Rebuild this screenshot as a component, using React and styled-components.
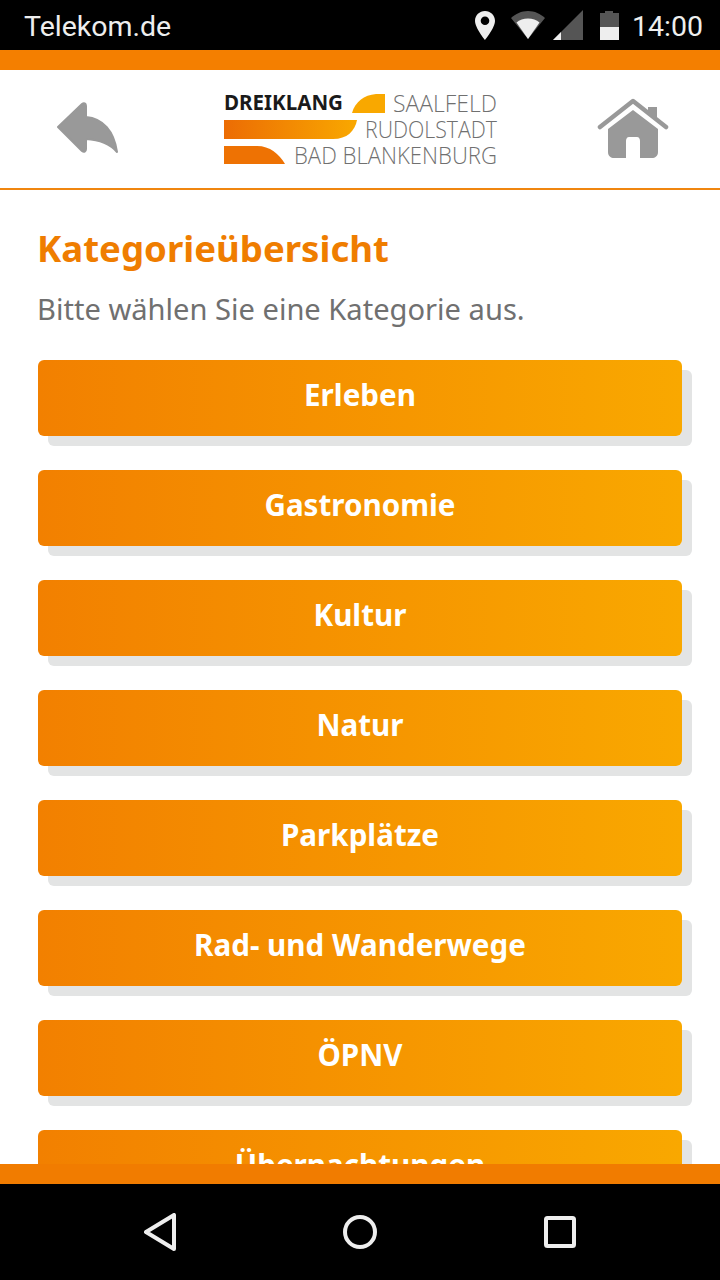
import React from 'react'
import styled, { createGlobalStyle } from 'styled-components'

const categories = [
    'Erleben',
    'Gastronomie',
    'Kultur',
    'Natur',
    'Parkplätze',
    'Rad- und Wanderwege',
    'ÖPNV',
    'Übernachtungen',
]

function App() {
    return (
        <Screen>
            <GlobalStyle />
            <StatusBar>
                <Carrier>Telekom.de</Carrier>
                <StatusIcons>
                    <svg width="20" height="29" viewBox="0 0 20 29">
                        <path fillRule="evenodd" fill="#eee" d="M10 0C4.5 0 0 4.3 0 9.8 0 17 10 29 10 29s10-12 10-19.200C20 4.300 15.500 0 10 0zm0 14a4.300 4.300 0 1 1 0-8.600 4.300 4.300 0 0 1 0 8.600z" />
                    </svg>
                    <WifiIcon width="34" height="28" viewBox="0 0 34 28">
                        <path fill="#555" d="M17 28 0 7C4.500 2.800 10.500 0 17 0s12.500 2.800 17 7z" />
                        <path fill="#eee" d="M17 28 5.500 11.500C8.500 9 12.500 7.500 17 7.500s8.500 1.500 11.500 4z" />
                    </WifiIcon>
                    <SignalIcon width="30" height="30" viewBox="0 0 30 30">
                        <path fill="#555" d="M0 30 30 0v30z" />
                        <path fill="#eee" d="M0 30 8 22v8z" />
                    </SignalIcon>
                    <BatteryIcon width="19" height="29" viewBox="0 0 19 29">
                        <path fill="#555" d="M5 0h8v2h6v14H0V2h5z" />
                        <path fill="#eee" d="M0 16h19v13H0z" />
                    </BatteryIcon>
                    <Clock>14:00</Clock>
                </StatusIcons>
            </StatusBar>
            <OrangeStrip />
            <Header>
                <svg width="62" height="52" viewBox="0 0 62 52">
                    <path fill="#999" stroke="#999" strokeWidth="2" strokeLinejoin="round" d="M1 25 25 2c2-1.500 4-.5 4 2v11c17 1.500 28 14 31 35-6-7-14-12-31-13v10c0 2.500-2 3.500-4 2z" />
                </svg>
                <LogoWrap>
                    <LogoMark width="273" height="71" viewBox="0 0 273 71">
                        <defs>
                            <linearGradient id="logoBar" x1="0" x2="1" y1="0" y2="0">
                                <stop offset="0" stopColor="#ec6c04" />
                                <stop offset="1" stopColor="#f9a800" />
                            </linearGradient>
                        </defs>
                        <LogoBold x="0" y="16" textLength="119" lengthAdjust="spacingAndGlyphs">DREIKLANG</LogoBold>
                        <path fill="#f9a800" d="M128 19C131 8 140 1 152 0h9v19z" />
                        <path fill="url(#logoBar)" d="M0 26h133c-2 11-10 19-24 19H0z" />
                        <path fill="#ee7203" d="M0 52h33c13 0 22 8 28 18H0z" />
                        <LogoLight x="169" y="18" textLength="104" lengthAdjust="spacingAndGlyphs">SAALFELD</LogoLight>
                        <LogoLight x="141" y="44" textLength="132" lengthAdjust="spacingAndGlyphs">RUDOLSTADT</LogoLight>
                        <LogoLight x="70" y="70" textLength="203" lengthAdjust="spacingAndGlyphs">BAD BLANKENBURG</LogoLight>
                    </LogoMark>
                </LogoWrap>
                <svg width="72" height="62" viewBox="0 0 72 62">
                    <path fill="none" stroke="#999" strokeWidth="4.500" strokeLinecap="round" strokeLinejoin="round" d="M3 30 36 4l33 26" />
                    <path fill="#999" d="M51 10h9v12l-9-7z" />
                    <path fill="#999" fillRule="evenodd" d="M36 13 61 32v23c0 4-3 6-6 6H43V44c0-2-1-4-3-4h-8c-2 0-3 2-3 4v17H17c-3 0-6-2-6-6V32z" />
                </svg>
            </Header>
            <Content>
                <Title>Kategorieübersicht</Title>
                <Intro>Bitte wählen Sie eine Kategorie aus.</Intro>
                <CategoryList>
                    {categories.map((name) => (
                        <CategoryButton key={name}>{name}</CategoryButton>
                    ))}
                </CategoryList>
            </Content>
            <FooterStrip />
            <NavBar>
                <svg width="32" height="38" viewBox="0 0 32 38">
                    <path fill="none" stroke="#eee" strokeWidth="4" strokeLinejoin="round" d="M30 2v34L2 19z" />
                </svg>
                <svg width="34" height="34" viewBox="0 0 34 34">
                    <circle cx="17" cy="17" r="15" fill="none" stroke="#eee" strokeWidth="4" />
                </svg>
                <svg width="32" height="32" viewBox="0 0 32 32">
                    <rect x="2" y="2" width="28" height="28" rx="1.500" fill="none" stroke="#eee" strokeWidth="4" />
                </svg>
            </NavBar>
        </Screen>
    )
}

const GlobalStyle = createGlobalStyle`
    html, body {
        margin: 0;
        padding: 0;
        background: #fff;
    }
    * {
        box-sizing: border-box;
    }
`

const Screen = styled.div`
    width: 720px;
    height: 1280px;
    display: flex;
    flex-direction: column;
    overflow: hidden;
    background: #fff;
    font-family: "Noto Sans", "Open Sans", sans-serif;
`

const StatusBar = styled.div`
    height: 50px;
    flex: none;
    display: flex;
    justify-content: space-between;
    align-items: center;
    padding: 0 17px 0 24px;
    background: #000;
    color: #eee;
    font-family: Roboto, "Liberation Sans", sans-serif;
    font-size: 28.5px;
`

const Carrier = styled.span`
    margin-top: 4px;
    line-height: 46px;
`

const StatusIcons = styled.div`
    display: flex;
    align-items: center;
`

const WifiIcon = styled.svg`
    margin-left: 16px;
`

const SignalIcon = styled.svg`
    margin-left: 8px;
`

const BatteryIcon = styled.svg`
    margin-left: 17px;
`

const Clock = styled.span`
    margin: 4px 0 0 13px;
    line-height: 46px;
`

const OrangeStrip = styled.div`
    height: 20px;
    flex: none;
    background: #f47f00;
`

const Header = styled.header`
    height: 120px;
    flex: none;
    display: flex;
    align-items: center;
    padding: 0 0 2px 57px;
    background: #fff;
    border-bottom: 2px solid #f0860f;
`

const LogoWrap = styled.div`
    display: flex;
    margin: 3px 100px 0 105px;
`

const LogoMark = styled.svg`
    overflow: visible;
`

const LogoBold = styled.text`
    font-family: "Noto Sans", sans-serif;
    font-weight: 700;
    font-size: 21px;
    fill: #1a1a1a;
`

const LogoLight = styled.text`
    font-family: "Open Sans", sans-serif;
    font-weight: 300;
    font-size: 23px;
    fill: #707070;
`

const Content = styled.main`
    flex: 1;
    min-height: 0;
    overflow: hidden;
    padding: 35px 38px 0;
`

const Title = styled.h1`
    margin: 0 0 0 -1px;
    font-size: 36.6px;
    line-height: 46px;
    font-weight: 700;
    color: #ef7d00;
`

const Intro = styled.p`
    margin: 20px 0 0 -1px;
    font-size: 29.1px;
    line-height: 36px;
    color: #707070;
`

const CategoryList = styled.div`
    display: flex;
    flex-direction: column;
    gap: 34px;
    margin-top: 33px;
`

const CategoryButton = styled.div`
    height: 76px;
    flex: none;
    display: flex;
    justify-content: center;
    align-items: center;
    width: 644px;
    padding-bottom: 8px;
    border-radius: 6px;
    background: linear-gradient(90deg, #f28000, #f9a800);
    box-shadow: 10px 10px 0 #e3e4e4;
    color: #fff;
    font-size: 29.6px;
    font-weight: 700;
`

const FooterStrip = styled.div`
    height: 20px;
    flex: none;
    background: #f17c00;
`

const NavBar = styled.nav`
    height: 96px;
    flex: none;
    display: flex;
    align-items: center;
    gap: 167px;
    padding: 0 0 0 144px;
    background: #000;
`

export default App
